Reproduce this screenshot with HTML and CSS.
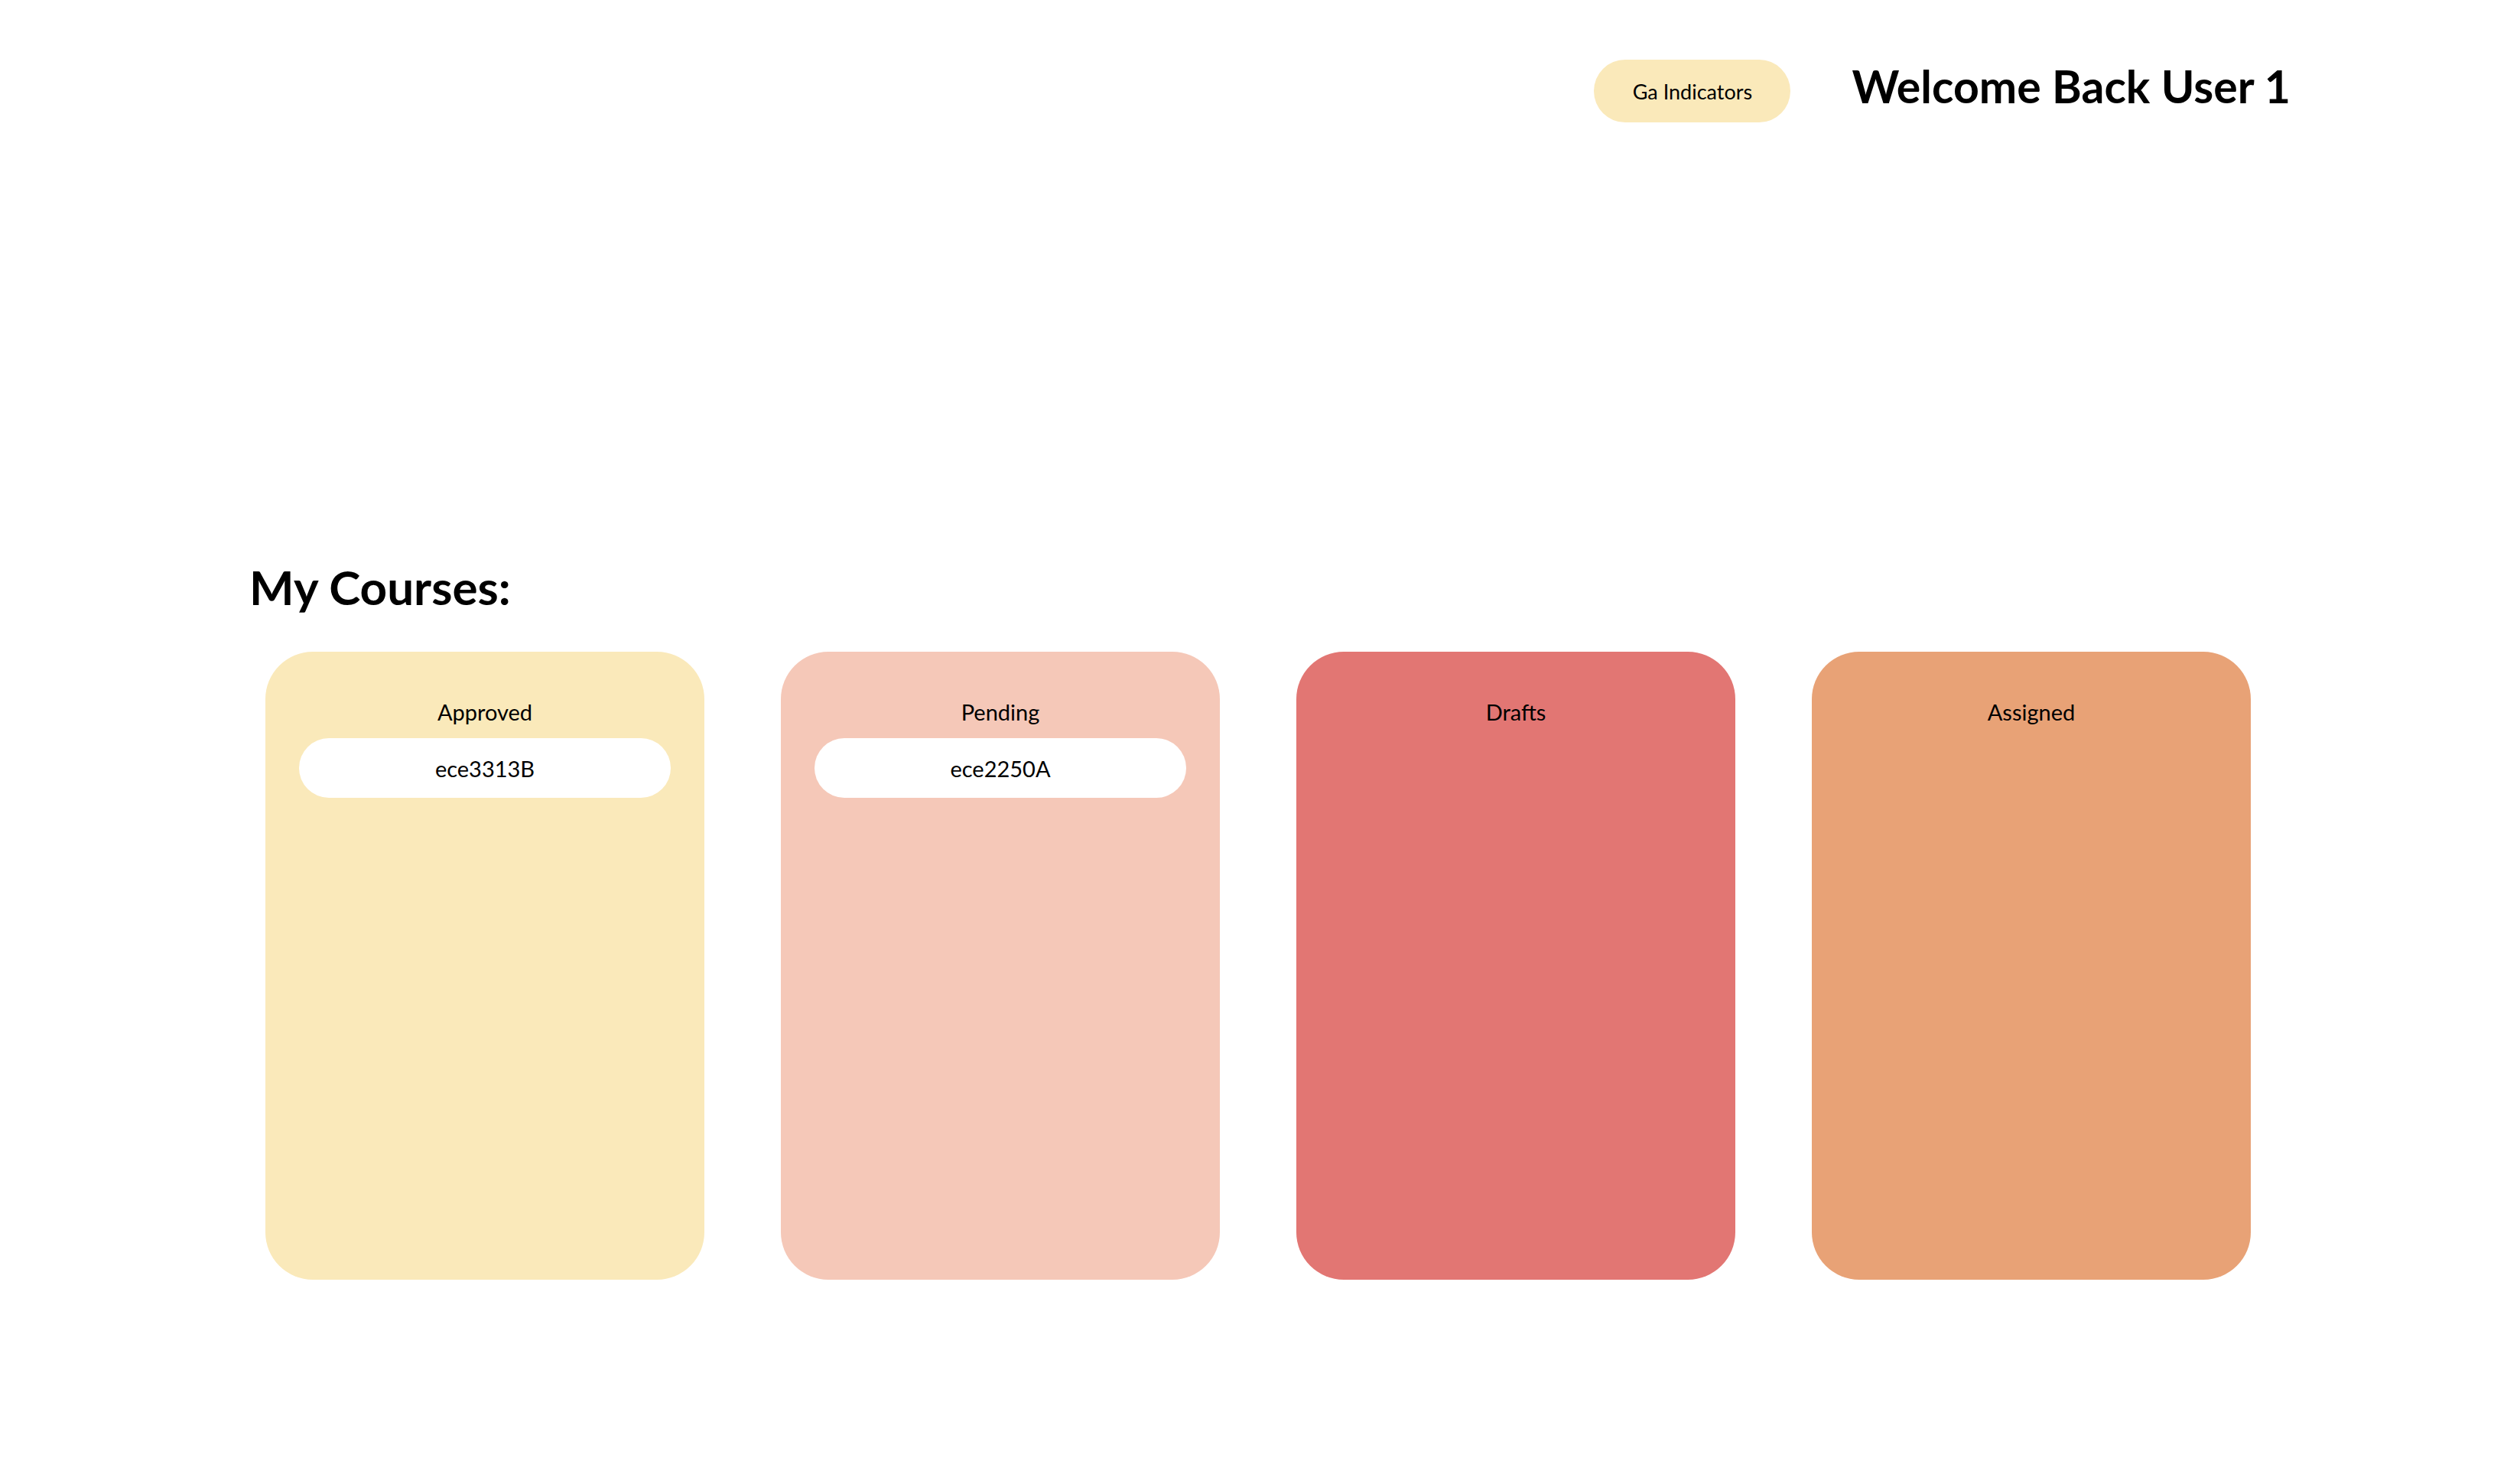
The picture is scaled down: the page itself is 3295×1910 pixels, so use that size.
FILE: index.html
```html
<!DOCTYPE html>
<html>
<head>
<meta charset="utf-8">
<link rel="stylesheet" href="styles.css">
</head>
<body>
<header class="topbar">
  <button class="ga-btn">Ga Indicators</button>
  <h1 class="welcome">Welcome Back User 1</h1>
</header>
<main class="courses">
  <h2 class="courses-title">My Courses:</h2>
  <div class="boards">
    <section class="board board-approved">
      <div class="board-label">Approved</div>
      <div class="course-pill">ece3313B</div>
    </section>
    <section class="board board-pending">
      <div class="board-label">Pending</div>
      <div class="course-pill">ece2250A</div>
    </section>
    <section class="board board-drafts">
      <div class="board-label">Drafts</div>
    </section>
    <section class="board board-assigned">
      <div class="board-label">Assigned</div>
    </section>
  </div>
</main>
</body>
</html>
```

FILE: styles.css
```css
html, body {
  margin: 0;
  padding: 0;
  background: #ffffff;
  color: #000000;
  font-family: "Lato", "Noto Sans", sans-serif;
}

.topbar {
  display: flex;
  justify-content: flex-end;
  align-items: center;
  gap: 80px;
  padding: 78px 300px 0 0;
  height: 82px;
}

.ga-btn {
  width: 257px;
  height: 82px;
  border: none;
  border-radius: 41px;
  background: #fae9ba;
  font-family: inherit;
  font-size: 27px;
  color: #000;
  padding: 0;
}

.welcome {
  margin: 0 0 14px 0;
  font-size: 59px;
  font-weight: 700;
  line-height: 1;
  white-space: nowrap;
}

.courses {
  padding: 0 0 0 326px;
  margin-top: 576px;
}

.courses-title {
  margin: 0;
  font-size: 62px;
  font-weight: 700;
  line-height: 1;
}

.boards {
  display: flex;
  gap: 100px;
  margin-top: 54px;
  padding-left: 21px;
}

.board {
  width: 574px;
  height: 821px;
  border-radius: 62px;
  box-sizing: border-box;
  padding: 60px 44px 0 44px;
  display: flex;
  flex-direction: column;
  align-items: stretch;
}

.board-label {
  text-align: center;
  font-size: 29px;
  line-height: 38px;
}

.course-pill {
  margin-top: 15px;
  height: 78px;
  border-radius: 39px;
  background: #ffffff;
  display: flex;
  align-items: center;
  justify-content: center;
  font-size: 29px;
}

.board-approved { background: #fae9ba; }
.board-pending { background: #f5c8b8; }
.board-drafts { background: #e27673; }
.board-assigned { background: #e8a276; }
```
